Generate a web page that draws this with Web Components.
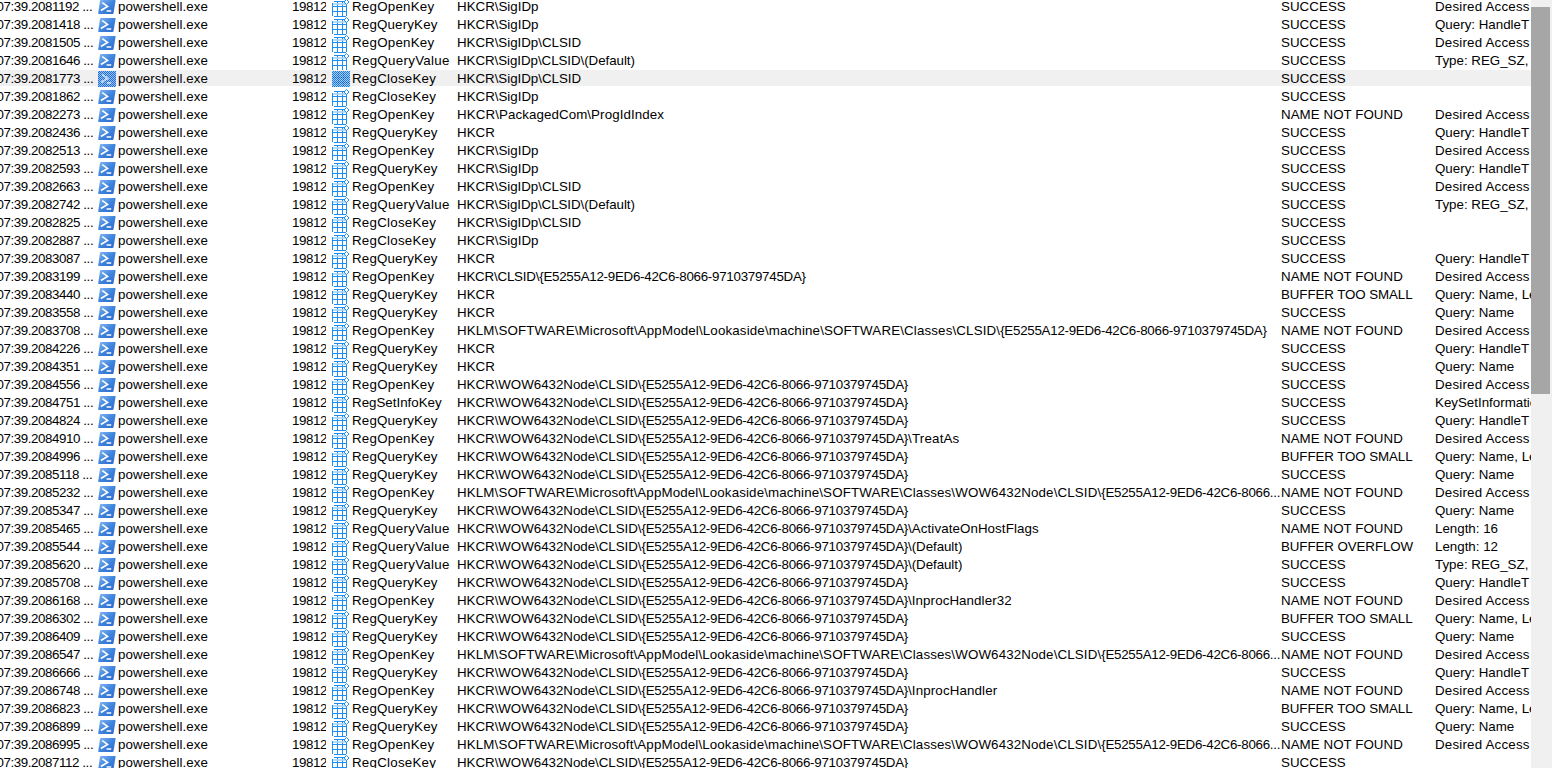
<!doctype html>
<html lang="en"><head><meta charset="utf-8"><title>Process Monitor</title>
<style>html,body{margin:0;padding:0;height:100%;overflow:hidden;background:#fff}</style></head>
<body><pm-app></pm-app>
<script>
const PS=`<svg width="18" height="16" viewBox="0 0 18 16"><defs><linearGradient id="g" x1="0" y1="0" x2="1" y2="1"><stop offset="0" stop-color="#86b8f2"/><stop offset=".5" stop-color="#3f84de"/><stop offset="1" stop-color="#2a68cc"/></linearGradient></defs><path d="M3 1h14q.8 0 .6.8L15.5 14.2q-.2.8-1 .8H.9q-.8 0-.7-.8L2 1.8q.2-.8 1-.8z" fill="url(#g)"/><path d="M4.3 3.6l5.2 3.8-6.6 4.1" fill="none" stroke="#fff" stroke-width="1.7"/><path d="M8.6 12h4.6" stroke="#fff" stroke-width="1.5"/></svg>`;
const PSS=`<svg width="18" height="16" viewBox="0 0 18 16" shape-rendering="crispEdges"><defs><pattern id="c" width="2" height="2" patternUnits="userSpaceOnUse"><rect width="1" height="1" fill="#fff"/><rect x="1" y="1" width="1" height="1" fill="#fff"/></pattern></defs><rect width="18" height="16" fill="#1f6fd6"/><path d="M4.3 3.6l5.2 3.8-6.6 4.1" fill="none" stroke="#9cc4f4" stroke-width="2"/><path d="M8.6 12h4.6" stroke="#9cc4f4" stroke-width="2"/><rect width="18" height="16" fill="url(#c)" opacity=".55"/></svg>`;
const REG=`<svg width="18" height="20" viewBox="0 0 18 20"><g fill="none" stroke="#1e8ef0" stroke-width="1" shape-rendering="crispEdges"><path d="M1.5 3.5h12M.5 4.5V18M14.5 4.5V18M1.5 18.5h12M.5 8.5h14M.5 13.5h14M5.5 3.5v15M10.5 3.5v15"/></g><path d="M1 6h13" stroke="#a8d4f8" stroke-width="1.6"/><path d="M14.5 1.5l2.5 2.5-2.5 2.5L12 4z" fill="#fff" stroke="#1e8ef0" stroke-width="1"/></svg>`;
const REGS=`<svg width="18" height="16" viewBox="0 0 18 16" shape-rendering="crispEdges"><defs><pattern id="c" width="2" height="2" patternUnits="userSpaceOnUse"><rect width="1" height="1" fill="#fff"/><rect x="1" y="1" width="1" height="1" fill="#fff"/></pattern></defs><rect width="18" height="16" fill="#1f7fe0"/><path d="M1 6h16M1 11h16M6 1v14M11 1v14" stroke="#0f5fc0" stroke-width="1"/><rect width="18" height="16" fill="url(#c)" opacity=".6"/></svg>`;
class PmIcon extends HTMLElement{
  connectedCallback(){
    const s=this.shadowRoot||this.attachShadow({mode:'open'});
    const k=this.getAttribute('kind'),sel=this.hasAttribute('selected');
    const pad=(k==='ps'||sel)?'p':'';
    s.innerHTML=`<style>:host{display:block;width:18px;height:18px;flex:none}svg{display:block;overflow:visible}.p{padding-top:1px}</style><div class="${pad}">${k==='ps'?(sel?PSS:PS):(sel?REGS:REG)}</div>`;
  }
}
customElements.define('pm-icon',PmIcon);
class PmRow extends HTMLElement{
  connectedCallback(){
    const s=this.shadowRoot||this.attachShadow({mode:'open'});
    const a=n=>this.getAttribute(n)||'';
    const sel=this.hasAttribute('selected')?'selected':'';
    const dls=a('det').startsWith('Desired')?.2:0;
    s.innerHTML=`<style>
:host{display:block;height:18px;flex:none}
.r{height:16px;margin:1px 0;display:grid;grid-template-columns:98px 194px 34px 131px 824px 154px 96px;align-items:center;line-height:16px;white-space:nowrap}
.r.on{background:#f0f0f0}
.c{overflow:hidden;min-width:0}
.time{letter-spacing:-.41px;text-indent:-3.6px}
.proc{display:flex;align-items:center;gap:2px;overflow:visible;letter-spacing:.08px}
.pid{text-align:right;letter-spacing:-.41px}
.op{display:flex;align-items:center;gap:2px;margin-left:6px;overflow:visible}
.op span{letter-spacing:var(--ls)}
.res{letter-spacing:var(--ls)}
.det{letter-spacing:${dls}px}
</style><div class="r ${sel?'on':''}"><div class="c time">${a('t')}</div><div class="c proc"><pm-icon kind="ps" ${sel}></pm-icon><span>powershell.exe</span></div><div class="c pid">19812</div><div class="c op" style="--ls:${a('opls')}px"><pm-icon kind="reg" ${sel}></pm-icon><span>${a('op')}</span></div><div class="c path"><slot></slot></div><div class="c res" style="--ls:${a('resls')}px">${a('res')}</div><div class="c det">${a('det')}</div></div>`;
  }
}
customElements.define('pm-row',PmRow);
const G='{E5255A12-9ED6-42C6-8066-9710379745DA}';
// each path is a list of [text, letter-spacing] runs, to follow the reference's hinted advance widths
const S=[['HKCR\\SigIDp',0]],C=[['HKCR\\SigIDp\\CLSID',-.02]],F=[['HKCR\\SigIDp\\CLSID\\(Default)',-.05]],K=[['HKCR',0]];
const W=(x,l)=>{const r=[['HKCR\\WOW6432Node\\CLSID\\',-.03],[G,-.26]];if(x)r.push([x,l]);return r};
const L=[['HKLM\\SOFTWARE\\Microsoft\\AppModel\\Lookaside\\machine\\SOFTWARE\\Classes\\WOW6432Node\\CLSID\\',.13],['{E5255A12-9ED6-42C6-8066...',-.26]];
const O='RegOpenKey',Q='RegQueryKey',V='RegQueryValue',X='RegCloseKey',
 OK='SUCCESS',NF='NAME NOT FOUND',BS='BUFFER TOO SMALL',
 D='Desired Access',H='Query: HandleT',T='Type: REG_SZ,',N='Query: Name, Le',M='Query: Name';
const OPLS={RegOpenKey:.24,RegQueryKey:.17,RegQueryValue:.3,RegCloseKey:.24,RegSetInfoKey:0};
const ROWS=[
['2081192',O,S,OK,D],['2081418',Q,S,OK,H],['2081505',O,C,OK,D],['2081646',V,F,OK,T],['2081773',X,C,OK,''],['2081862',X,S,OK,''],
['2082273',O,[['HKCR\\PackagedCom\\ProgIdIndex',.09]],NF,D],['2082436',Q,K,OK,H],['2082513',O,S,OK,D],['2082593',Q,S,OK,H],['2082663',O,C,OK,D],['2082742',V,F,OK,T],['2082825',X,C,OK,''],['2082887',X,S,OK,''],
['2083087',Q,K,OK,H],['2083199',O,[['HKCR\\CLSID\\',-.2],[G,-.26]],NF,D],['2083440',Q,K,BS,N],['2083558',Q,K,OK,M],
['2083708',O,[['HKLM\\SOFTWARE\\Microsoft\\AppModel\\Lookaside\\machine\\SOFTWARE\\Classes\\CLSID\\',.147],[G,-.26]],NF,D],['2084226',Q,K,OK,H],['2084351',Q,K,OK,M],
['2084556',O,W(),OK,D],['2084751','RegSetInfoKey',W(),OK,'KeySetInformation'],['2084824',Q,W(),OK,H],['2084910',O,W('\\TreatAs',.2),NF,D],['2084996',Q,W(),BS,N],['2085118',Q,W(),OK,M],
['2085232',O,L,NF,D],['2085347',Q,W(),OK,M],['2085465',V,W('\\ActivateOnHostFlags',.09),NF,'Length: 16'],['2085544',V,W('\\(Default)',-.05),'BUFFER OVERFLOW','Length: 12'],['2085620',V,W('\\(Default)',-.05),OK,T],['2085708',Q,W(),OK,H],
['2086168',O,W('\\InprocHandler32',.09),NF,D],['2086302',Q,W(),BS,N],['2086409',Q,W(),OK,M],['2086547',O,L,NF,D],['2086666',Q,W(),OK,H],['2086748',O,W('\\InprocHandler',.13),NF,D],['2086823',Q,W(),BS,N],['2086899',Q,W(),OK,M],['2086995',O,L,NF,D],['2087112',X,W(),OK,'']];
class PmTable extends HTMLElement{
  connectedCallback(){
    const s=this.shadowRoot||this.attachShadow({mode:'open'});
    s.innerHTML=`<style>:host{display:block;flex:1;min-width:0;overflow:hidden;height:768px}.l{display:flex;flex-direction:column;margin-top:-3px}</style><div class="l"></div>`;
    const l=s.querySelector('.l');
    ROWS.forEach((r,i)=>{
      const e=document.createElement('pm-row');
      e.setAttribute('t','07:39.'+r[0]+' ...');e.setAttribute('op',r[1]);e.setAttribute('opls',OPLS[r[1]]);
      e.setAttribute('res',r[3]);e.setAttribute('resls',r[3].startsWith('BUFFER')?-.08:.05);e.setAttribute('det',r[4]);
      if(i===4)e.setAttribute('selected','');
      r[2].forEach(([t,ls])=>{const p=document.createElement('span');p.textContent=t;p.style.letterSpacing=ls+'px';e.appendChild(p)});
      l.appendChild(e);
    });
  }
}
customElements.define('pm-table',PmTable);
class PmScrollbar extends HTMLElement{
  connectedCallback(){
    const s=this.shadowRoot||this.attachShadow({mode:'open'});
    s.innerHTML=`<style>:host{display:block;width:21px;flex:none;height:768px;background:#f0f0f0;padding:7px 2px 0 0;box-sizing:border-box}.t{height:387px;background:#a6a6a6}</style><div class="t"></div>`;
  }
}
customElements.define('pm-scrollbar',PmScrollbar);
class PmApp extends HTMLElement{
  connectedCallback(){
    const s=this.shadowRoot||this.attachShadow({mode:'open'});
    s.innerHTML=`<style>:host{display:flex;width:1552px;height:768px;overflow:hidden;background:#fff;color:#000;font:13.33px/16px "Liberation Sans",Arial,sans-serif}</style><pm-table></pm-table><pm-scrollbar></pm-scrollbar>`;
  }
}
customElements.define('pm-app',PmApp);
</script></body></html>
